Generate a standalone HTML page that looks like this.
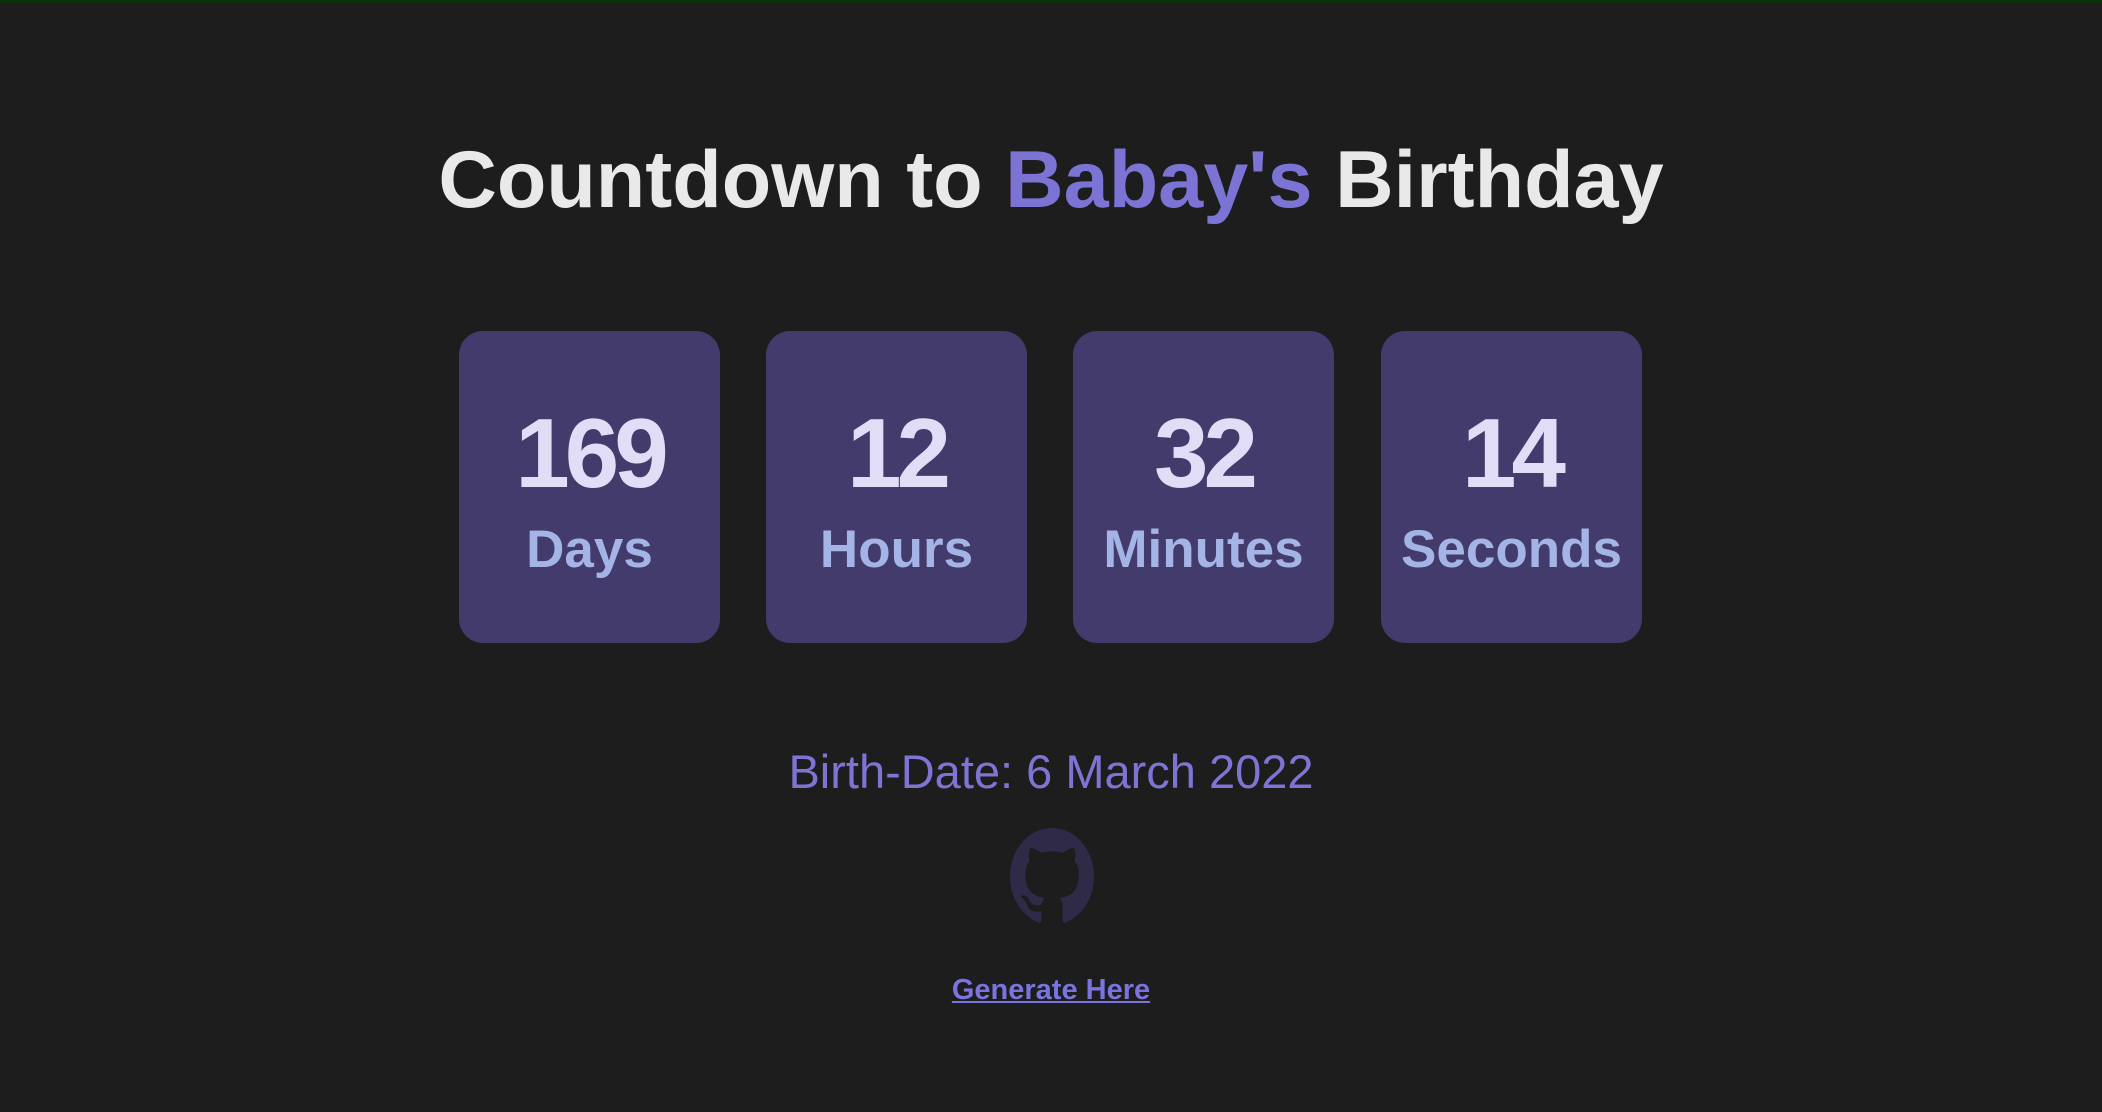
<!DOCTYPE html>
<html><head><meta charset="utf-8"><style>
html,body{margin:0;padding:0;}
body{width:2102px;height:1112px;background:#1d1d1d;position:relative;overflow:hidden;font-family:"Liberation Sans",sans-serif;}
.top{position:absolute;left:0;top:0;width:100%;height:3px;background:#0b320b;}
.title{position:absolute;left:0;width:2102px;top:130px;text-align:center;font-weight:bold;font-size:81px;line-height:100px;color:#e9e9e9;}
.title span{color:#7c74d4;}
.box{position:absolute;top:331px;width:261px;height:312px;background:#433b6b;border-radius:24px;text-align:center;}
.num{position:absolute;top:398px;text-align:center;font-weight:bold;font-size:98px;line-height:110px;color:#e2ddf6;letter-spacing:-5px;}
.lab{position:absolute;top:515px;text-align:center;font-weight:bold;font-size:53px;line-height:70px;color:#a5b4e6;}
.bd{position:absolute;left:0;width:2102px;top:742px;text-align:center;font-size:47px;line-height:60px;color:#7d74d4;}
.gh{position:absolute;left:1010px;top:828px;}
.gen{position:absolute;left:0;width:2102px;top:972px;text-align:center;font-size:29px;font-weight:bold;line-height:36px;}
.gen a{color:#7a74e0;text-decoration:underline;}
</style></head><body>
<div class="top"></div>
<div class="title">Countdown to <span>Babay's</span> Birthday</div>
<div class="box" style="left:459px"></div>
<div class="box" style="left:766px"></div>
<div class="box" style="left:1073px"></div>
<div class="box" style="left:1381px"></div>
<div class="num" style="left:459px;width:261px">169</div>
<div class="num" style="left:766px;width:261px">12</div>
<div class="num" style="left:1073px;width:261px">32</div>
<div class="num" style="left:1381px;width:261px">14</div>
<div class="lab" style="left:459px;width:261px">Days</div>
<div class="lab" style="left:766px;width:261px">Hours</div>
<div class="lab" style="left:1073px;width:261px">Minutes</div>
<div class="lab" style="left:1381px;width:261px">Seconds</div>
<div class="bd">Birth-Date: 6 March 2022</div>
<svg class="gh" width="84" height="97" viewBox="0 0 16 16" preserveAspectRatio="none"><path fill="#2f2a48" d="M8 0C3.58 0 0 3.58 0 8c0 3.54 2.29 6.53 5.470 7.59.4.07.55-.17.55-.38 0-.19-.01-.82-.01-1.49-2.01.37-2.53-.49-2.69-.94-.09-.23-.48-.94-.82-1.130-.28-.15-.68-.52-.01-.53.63-.01 1.08.58 1.23.82.72 1.21 1.87.87 2.33.66.07-.52.28-.87.51-1.07-1.78-.2-3.64-.89-3.64-3.95 0-.87.31-1.59.82-2.15-.08-.2-.36-1.02.08-2.12 0 0 .67-.21 2.2.82.64-.18 1.32-.27 2-.27.68 0 1.36.09 2 .27 1.53-1.04 2.2-.82 2.2-.82.44 1.1.16 1.92.08 2.12.51.56.82 1.27.82 2.15 0 3.07-1.87 3.75-3.65 3.95.29.25.54.73.54 1.48 0 1.07-.01 1.93-.01 2.2 0 .21.15.46.55.38A8.013 8.013 0 0016 8c0-4.42-3.58-8-8-8z"/></svg>
<div class="gen"><a>Generate Here</a></div>
</body></html>
